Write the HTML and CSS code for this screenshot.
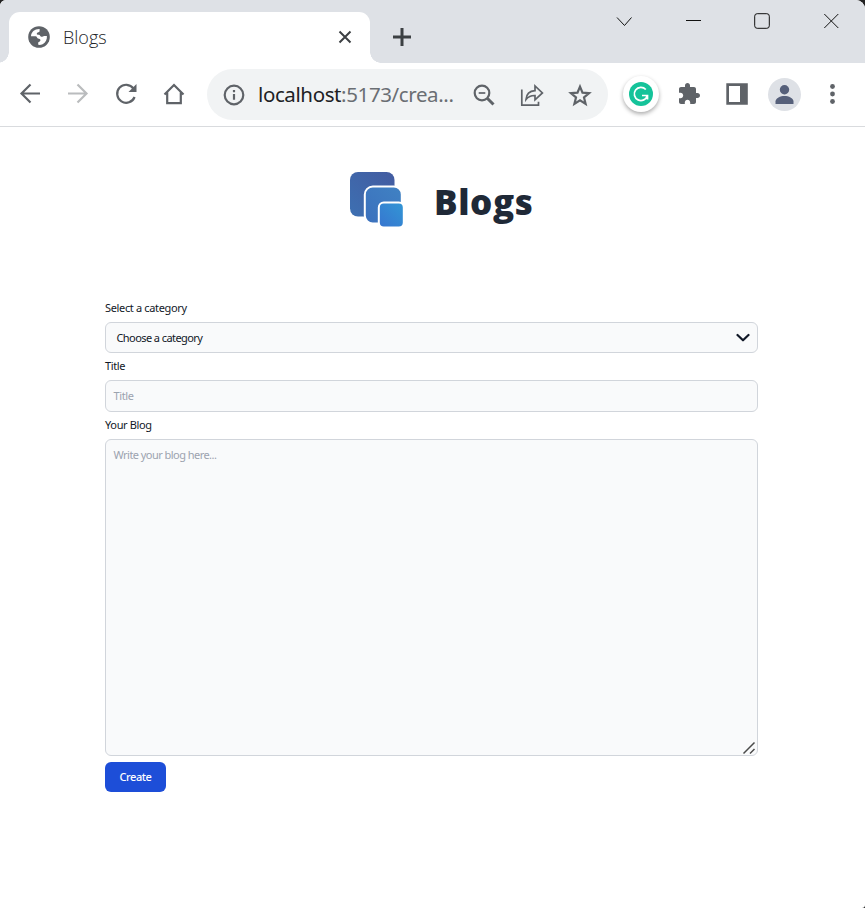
FILE: index.html
```html
<!DOCTYPE html>
<html lang="en">
<head>
<meta charset="utf-8">
<title>Blogs</title>
<link rel="stylesheet" href="styles.css">
</head>
<body>
<div class="window">
  <header class="tabstrip">
    <div class="tab">
      <svg class="globe" width="22" height="22" viewBox="0 0 22 22"><circle cx="11" cy="11" r="10.8" fill="#5f6368"/><path fill="#fff" d="M3 10.300C3 6 6.800 2.800 11.600 3v2.200c-.2 1.200-2.600.8-2.800 2.200-.2 1.200.6 1.300 2 1.400 1.500.1 1.200 1.700 2.400 2 1.300.3 1.800-.8 3-.8h2.700c.3 3.300-1.200 6.800-4.300 8.200-1.600.7-3 .9-4.400.6v-2.100c.2-1.200 2-.8 2.200-2.200.2-1.300-1.200-1.500-2.400-1.900-1.200-.5-.9-2.300-2.400-2.300z"/></svg>
      <span class="tab-title">Blogs</span>
      <svg class="tab-close" width="14" height="14" viewBox="0 0 14 14"><path d="M1.500 1.500l11 11M12.500 1.500l-11 11" stroke="#3c4043" stroke-width="2"/></svg>
    </div>
    <svg class="new-tab" width="20" height="20" viewBox="0 0 20 20"><path d="M10 1v18M1 10h18" stroke="#3c4043" stroke-width="3"/></svg>
    <div class="controls">
      <svg width="16" height="16" viewBox="0 0 16 16"><path d="M1 4.500L8.500 12.500l7-8" class="thin"/></svg>
      <svg width="16" height="16" viewBox="0 0 16 16"><path d="M1 7.500h15" class="thin"/></svg>
      <svg width="16" height="16" viewBox="0 0 16 16"><rect x=".7" y=".7" width="14.600" height="14.600" rx="2.500" class="thin"/></svg>
      <svg width="16" height="16" viewBox="0 0 16 16"><path d="M1.300 1l14 14M15.300 1l-14 14" class="thin"/></svg>
    </div>
  </header>

  <nav class="toolbar">
    <div class="nav-icons">
      <svg width="24" height="24" viewBox="0 0 24 24"><path d="M22 11.500H4M12.500 2.500l-9 9 9 9" class="line"/></svg>
      <svg width="24" height="24" viewBox="0 0 24 24"><path d="M2 11.500h18M11.500 2.500l9 9-9 9" class="line faded"/></svg>
      <svg width="24" height="24" viewBox="0 0 24 24"><path d="M19.500 6.500A9 9 0 1 0 20.600 15" class="line"/><path d="M22.500 2v8h-8z" fill="#5f6368"/></svg>
      <svg width="24" height="24" viewBox="0 0 24 24"><path d="M2.500 12.500L12 3l9.500 9.500M5.200 10.500v10.700h13.600V10.500" class="line"/></svg>
    </div>
    <div class="omnibox">
      <svg class="info" width="22" height="22" viewBox="0 0 22 22"><circle cx="11" cy="11" r="9.300" class="line"/><path d="M11 10v5.700M11 6v2.200" class="line"/></svg>
      <span class="url"><b>localhost</b>:5173/crea...</span>
      <div class="actions">
        <svg width="24" height="24" viewBox="0 0 24 24"><circle cx="10" cy="10" r="7.300" class="line"/><path d="M15.500 15.500l6 6" stroke="#5f6368" stroke-width="3"/><path d="M6.700 10h6.600" class="line slim"/></svg>
        <svg width="24" height="24" viewBox="0 0 24 24"><path d="M1.800 6.500v15.700h16.700v-3.400" class="line slim"/><path d="M6 16.500c.4-5.800 3.600-8.600 9-8.900V3l7.400 7-7.400 6.800v-4.300c-3.600-.1-6.600 1-9 4z" class="line slim"/></svg>
        <svg width="24" height="24" viewBox="0 0 24 24"><path d="M12 3.600l2.500 6.100 6.600.5-5.100 4.300 1.600 6.400-5.600-3.500-5.600 3.500L8 14.500 2.900 10.200l6.600-.5z" class="line"/></svg>
      </div>
    </div>
    <div class="extensions">
      <div class="grammarly"><svg width="24" height="24" viewBox="0 0 24 24"><circle cx="12" cy="12" r="12" fill="#15c39a"/><path d="M16.800 7.500A6.600 6.600 0 1 0 18.300 13.500M13 13.500h5.500v4" fill="none" stroke="#fff" stroke-width="1.700"/></svg></div>
      <svg class="puzzle" width="24" height="24" viewBox="0 0 24 24"><path fill="#5f6368" d="M20.500 11H19V7c0-1.100-.9-2-2-2h-4V3.500C13 2.120 11.880 1 10.500 1S8 2.120 8 3.500V5H4c-1.100 0-1.990.9-1.990 2v3.800H3.500c1.490 0 2.700 1.210 2.700 2.700s-1.210 2.700-2.700 2.700H2V20c0 1.100.9 2 2 2h3.800v-1.500c0-1.490 1.210-2.700 2.700-2.700 1.490 0 2.700 1.210 2.700 2.700V22H17c1.100 0 2-.9 2-2v-4h1.500c1.380 0 2.500-1.120 2.500-2.500S21.880 11 20.500 11z"/></svg>
      <svg class="panel" width="24" height="24" viewBox="0 0 24 24"><path fill="#5f6368" fill-rule="evenodd" d="M1.300 1.300h21.500v21.500H1.300zM4 4v16h11V4z"/></svg>
      <svg class="avatar" width="33" height="33" viewBox="0 0 33 33"><circle cx="16.500" cy="16.500" r="16.500" fill="#dee1e6"/><circle cx="16.500" cy="11.700" r="4.700" fill="#56607a"/><path d="M7.500 26v-2.500c0-3.500 5-5.500 9-5.500s9 2 9 5.500V26z" fill="#56607a"/></svg>
      <svg class="more" width="24" height="24" viewBox="0 0 24 24"><g fill="#5f6368"><circle cx="12.500" cy="4.500" r="2.400"/><circle cx="12.500" cy="12" r="2.400"/><circle cx="12.500" cy="19.500" r="2.400"/></g></svg>
    </div>
  </nav>

  <main class="page">
    <div class="brand">
      <svg width="54" height="56" viewBox="0 0 54 56">
        <defs>
          <linearGradient id="a" x1="0" y1="1" x2="1" y2="0"><stop stop-color="#3d70b2"/><stop offset="1" stop-color="#435ba0"/></linearGradient>
          <linearGradient id="b" x1="0" y1="1" x2="1" y2="0"><stop stop-color="#3b70bd"/><stop offset="1" stop-color="#4082c3"/></linearGradient>
          <linearGradient id="c" x1="0" y1="1" x2="1" y2="0"><stop stop-color="#3774cf"/><stop offset="1" stop-color="#3297d5"/></linearGradient>
        </defs>
        <rect x="0" y="0" width="44.500" height="44.500" rx="8" fill="url(#a)"/>
        <rect x="14.800" y="14.500" width="37" height="37" rx="8" fill="url(#b)" stroke="#fff" stroke-width="2"/>
        <rect x="28.800" y="30.500" width="25" height="25" rx="5" fill="url(#c)" stroke="#fff" stroke-width="2"/>
      </svg>
      <h1>Blogs</h1>
    </div>
    <form class="form">
      <label>Select a category</label>
      <div class="field select"><span>Choose a category</span><svg width="14" height="10" viewBox="0 0 14 10"><path d="M1.500 2L7 7.300 12.500 2" fill="none" stroke="#111827" stroke-width="2.200" stroke-linecap="round" stroke-linejoin="round"/></svg></div>
      <label>Title</label>
      <div class="field input"><span>Title</span></div>
      <label>Your Blog</label>
      <div class="field textarea"><span>Write your blog here...</span><svg class="grip" width="14" height="14" viewBox="0 0 14 14"><path d="M1.500 12.500l11-11M8 12.500l4.500-4.500" stroke="#4b4b4b" stroke-width="1.500"/></svg></div>
      <button type="button">Create</button>
    </form>
  </main>
</div>
</body>
</html>
```
FILE: styles.css
```css
* { box-sizing: border-box; }
html { background: #222; }
body { margin: 0; font-family: "Noto Sans", "Open Sans", sans-serif; }
svg { display: block; flex: none; }
.window { height: 908px; background: #fff; border-radius: 6px 9px 3px 0; overflow: hidden; }

.tabstrip { height: 63px; background: #dee1e6; display: flex; align-items: flex-start; }
.tab { position: relative; width: 361px; height: 51px; margin: 12px 0 0 9px; padding: 0 18px 1px 19px; background: #fff; border-radius: 11px 11px 0 0; display: flex; align-items: center; }
.tab::before, .tab::after { content: ""; position: absolute; bottom: 0; width: 11px; height: 11px; }
.tab::before { left: -11px; background: radial-gradient(circle at 0 0, transparent 10.5px, #fff 11px); }
.tab::after { right: -11px; background: radial-gradient(circle at 100% 0, transparent 10.5px, #fff 11px); }
.tab-title { margin: 0 0 1px 13px; font: 300 18px/24px "Open Sans", sans-serif; color: #222528; }
.tab-close { margin-left: auto; }
.new-tab { margin: 27px 0 0 22px; }
.controls { display: flex; gap: 53px; margin: 13px 26px 0 auto; }
.thin { fill: none; stroke: #111; stroke-width: 1; }

.toolbar { height: 64px; border-bottom: 1px solid #d9dbde; display: flex; align-items: center; padding-left: 18px; }
.nav-icons { display: flex; gap: 24px; margin-bottom: 1px; }
.line { fill: none; stroke: #5f6368; stroke-width: 2.2; }
.slim { stroke-width: 1.7; }
.faded { stroke: #babcbe; }
.omnibox { width: 401px; height: 51px; margin-left: 21px; padding: 0 16px; background: #f1f3f4; border-radius: 26px; display: flex; align-items: center; }
.url { margin: 0 0 1px 13px; font-size: 20.500px; line-height: 30px; color: #6a6e73; white-space: nowrap; letter-spacing: -.39px; }
.url b { font-weight: 400; color: #202124; }
.actions { display: flex; gap: 24px; margin-left: auto; }
.extensions { display: flex; align-items: center; margin-bottom: 1px; }
.grammarly { width: 36px; height: 36px; margin-left: 15px; border-radius: 50%; background: #fff; box-shadow: 0 2px 4px #0005; display: flex; align-items: center; justify-content: center; }
.puzzle { margin-left: 18px; }
.panel { margin-left: 24px; }
.avatar { margin-left: 19px; }
.more { margin-left: 19px; }

.page { padding: 45px 107px 0 105px; }
.brand { display: flex; margin-left: 245px; height: 56px; align-items: center; }
h1 { margin: 4px 0 0 30px; font: 800 35px/48px "Open Sans", sans-serif; letter-spacing: .6px; color: #1f2937; }
.form { margin-top: 72px; display: flex; flex-direction: column; align-items: stretch; font-size: 11px; line-height: 16px; color: #111827; }
label { height: 16px; margin-bottom: 6px; white-space: nowrap; letter-spacing: -.35px; }
.field { border: 1px solid #d1d5db; border-radius: 6px; background: #f9fafb; display: flex; align-items: center; padding: 0 7.500px; color: #9ca3af; white-space: nowrap; letter-spacing: -.54px; }
.select { height: 31px; padding: 0 7px 0 10.500px; justify-content: space-between; color: #111827; margin-bottom: 5px; letter-spacing: -.58px; }
.input { height: 32px; margin-bottom: 5px; letter-spacing: -.35px; }
.textarea { position: relative; height: 317px; align-items: flex-start; padding-top: 7px; margin-bottom: 6px; }
.grip { position: absolute; right: 1px; bottom: 0; }
button { align-self: flex-start; width: 61px; height: 30px; padding: 0; border: 0; border-radius: 6px; background: #1d4ed8; color: #fff; font: 500 11px/16px "Noto Sans", sans-serif; letter-spacing: -.45px; }
```
